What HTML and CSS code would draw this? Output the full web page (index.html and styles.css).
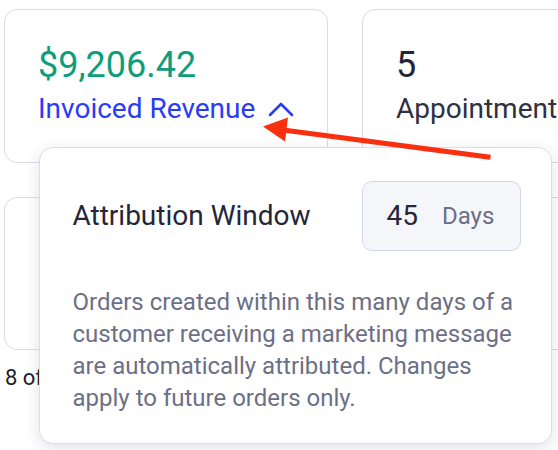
FILE: index.html
```html
<!DOCTYPE html>
<html lang="en">
<head>
    <meta charset="UTF-8">
    <meta name="viewport" content="width=device-width, initial-scale=1.0">
    <title>Attribution Window</title>
    <link rel="stylesheet" href="styles.css">
</head>
<body>

<div class="stats">
    <div class="card">
        <div class="value value-green">$9,206.42</div>
        <div class="label label-link">
            Invoiced Revenue
            <svg class="chevron" width="26" height="16" viewBox="0 0 26 16">
                <polyline points="2,14 13,3 24,14" fill="none" stroke="#2a3cf4" stroke-width="2.6" stroke-linecap="round" stroke-linejoin="round"/>
            </svg>
        </div>
    </div>
    <div class="card">
        <div class="value">5</div>
        <div class="label">Appointments</div>
    </div>
    <div class="card"></div>
    <div class="card"></div>
</div>

<p class="summary">8 of 12 metrics shown</p>

<div class="popover">
    <div class="popover-head">
        <span class="popover-title">Attribution Window</span>
        <div class="days-input">
            <span class="days-num">45</span>
            <span class="days-unit">Days</span>
        </div>
    </div>
    <p class="popover-text">Orders created within this many days of a customer receiving a marketing message are automatically attributed. Changes apply to future orders only.</p>
</div>

<!-- annotation arrow on top of the screenshot -->
<svg class="arrow" width="558" height="450" viewBox="0 0 558 450">
    <line x1="488" y1="157" x2="280" y2="129.5" stroke="#f9300f" stroke-width="5" stroke-linecap="square"/>
    <polygon points="263,126.5 288,117.5 285,141.5" fill="#f9300f"/>
</svg>

</body>
</html>
```

FILE: styles.css
```css
body {
    font-family: Roboto, "Noto Sans", sans-serif;
    background-color: #ffffff;
    margin: 0;
    padding: 0;
    width: 558px;
    height: 450px;
    overflow: hidden;
    position: relative;
}

.stats {
    display: grid;
    grid-template-columns: 324px 324px;
    grid-template-rows: 154px 153px;
    gap: 34px;
    padding: 9px 0 0 4px;
}

.card {
    box-sizing: border-box;
    border: 1.5px solid #d9dbe7;
    border-radius: 13px;
    padding: 34px 0 0 33px;
    white-space: nowrap;
}

.value {
    font-size: 36px;
    color: #23243a;
}

.value-green {
    color: #0c9d7b;
}

.label {
    font-size: 28px;
    color: #2e3044;
    margin-top: 6px;
}

.label-link {
    color: #2a3cf4;
}

.chevron {
    margin-left: 6px;
    vertical-align: 1px;
}

.summary {
    margin: 15px 0 0 5px;
    font-size: 22px;
    color: #1e1f2a;
    white-space: nowrap;
}

.popover {
    position: absolute;
    left: 39px;
    top: 147px;
    width: 513px;
    height: 297px;
    box-sizing: border-box;
    background-color: #ffffff;
    border: 1.5px solid #dcdde8;
    border-radius: 14px;
    box-shadow: 0 4px 16px rgba(30, 35, 70, 0.13);
    padding: 32.5px 30.5px 0 32.5px;
}

.popover-head {
    display: flex;
    align-items: center;
    justify-content: space-between;
}

.popover-title {
    font-size: 28px;
    color: #25263a;
}

.days-input {
    box-sizing: border-box;
    width: 159px;
    height: 70px;
    display: flex;
    align-items: center;
    gap: 24px;
    padding-left: 24px;
    background-color: #f5f6fa;
    border: 1.5px solid #d5d7e3;
    border-radius: 10px;
}

.days-num {
    font-size: 28px;
    color: #25263a;
}

.days-unit {
    font-size: 24px;
    color: #6c6f86;
}

.popover-text {
    margin: 35px 0 0 0;
    font-size: 24px;
    line-height: 32px;
    color: #6c6f86;
}

.arrow {
    position: absolute;
    left: 0;
    top: 0;
}
```
